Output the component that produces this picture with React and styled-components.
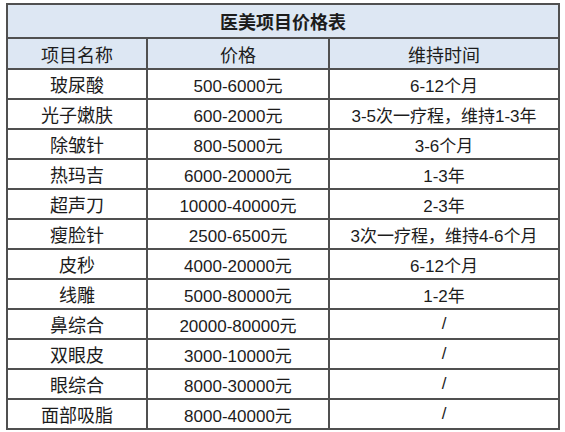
import React from 'react'
import styled, { createGlobalStyle } from 'styled-components'

const GlobalStyle = createGlobalStyle`
  html, body {
    margin: 0;
    padding: 0;
    background: #ffffff;
  }
  body {
    font-family: "Liberation Sans", "Noto Sans CJK SC", sans-serif;
    color: #1c1c1c;
  }
`

const Page = styled.div`
  padding: 3px 0 0 6px;
`

const Table = styled.table`
  width: 552px;
  table-layout: fixed;
  border-collapse: collapse;
  border: 2px solid #505050;
`

const TitleCell = styled.th`
  height: 32px;
  padding: 0;
  background: #dde7f3;
  border: 2px solid #505050;
  font-size: 18px;
  font-weight: bold;
  text-align: center;
  font-family: "Noto Sans CJK SC", sans-serif;
`

const HeadCell = styled.th`
  height: 29px;
  padding: 0;
  background: #dde7f3;
  border: 2px solid #505050;
  font-size: 18px;
  font-weight: normal;
  text-align: center;
  font-family: "Noto Sans CJK SC", sans-serif;
`

const Cell = styled.td`
  height: 28px;
  padding: 0;
  border: 2px solid #505050;
  font-size: 17px;
  text-align: center;
  white-space: nowrap;
  font-family: ${p => (p.$cjk ? '"Noto Sans CJK SC", sans-serif' : '"Liberation Sans", "Noto Sans CJK SC", sans-serif')};
  ${p => p.$cjk && 'font-size: 18px;'}
`

const rows = [
  ['玻尿酸', '500-6000元', '6-12个月'],
  ['光子嫩肤', '600-2000元', '3-5次一疗程，维持1-3年'],
  ['除皱针', '800-5000元', '3-6个月'],
  ['热玛吉', '6000-20000元', '1-3年'],
  ['超声刀', '10000-40000元', '2-3年'],
  ['瘦脸针', '2500-6500元', '3次一疗程，维持4-6个月'],
  ['皮秒', '4000-20000元', '6-12个月'],
  ['线雕', '5000-80000元', '1-2年'],
  ['鼻综合', '20000-80000元', '/'],
  ['双眼皮', '3000-10000元', '/'],
  ['眼综合', '8000-30000元', '/'],
  ['面部吸脂', '8000-40000元', '/'],
]

export default function App() {
  return (
    <Page>
      <GlobalStyle />
      <Table>
        <colgroup>
          <col style={{ width: 140 }} />
          <col style={{ width: 182 }} />
          <col style={{ width: 230 }} />
        </colgroup>
        <thead>
          <tr>
            <TitleCell colSpan={3}>医美项目价格表</TitleCell>
          </tr>
          <tr>
            <HeadCell>项目名称</HeadCell>
            <HeadCell>价格</HeadCell>
            <HeadCell>维持时间</HeadCell>
          </tr>
        </thead>
        <tbody>
          {rows.map(([name, price, time]) => (
            <tr key={name}>
              <Cell $cjk>{name}</Cell>
              <Cell>{price}</Cell>
              <Cell>{time}</Cell>
            </tr>
          ))}
        </tbody>
      </Table>
    </Page>
  )
}
